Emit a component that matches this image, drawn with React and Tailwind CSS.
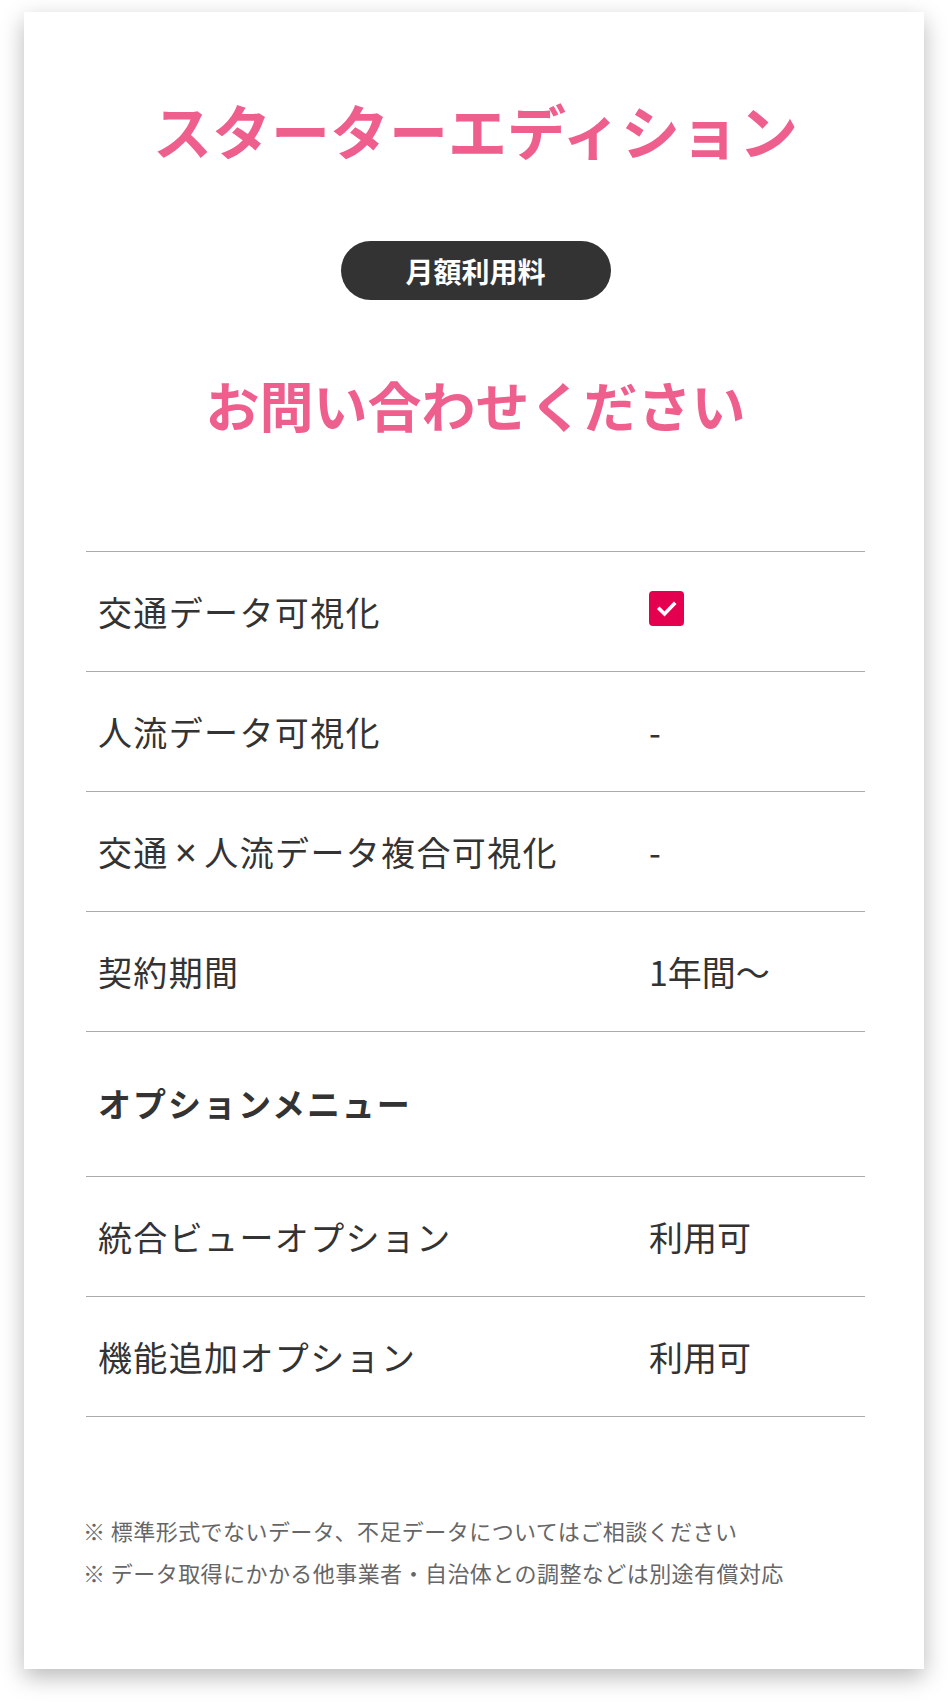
const rows = [
  { label: '交通データ可視化', value: 'check' },
  { label: '人流データ可視化', value: '-' },
  { label: 'cross', value: '-' },
  { label: '契約期間', value: '1年間〜' },
];

const options = [
  { label: '統合ビューオプション', value: '利用可' },
  { label: '機能追加オプション', value: '利用可' },
];

function CheckBox() {
  return (
    <span className="inline-flex w-[35px] h-[35px] rounded-[4px] bg-[#e5004f] items-center justify-center">
      <svg width="35" height="35" viewBox="0 0 35 35" fill="none">
        <polyline
          points="10.5,18 15.5,23 25,13"
          stroke="#fff"
          strokeWidth="3.6"
          strokeLinecap="square"
          strokeLinejoin="miter"
        />
      </svg>
    </span>
  );
}

function Label({ label }) {
  if (label === 'cross') {
    return (
      <>
        交通
        <span className="px-[6px] font-['Liberation_Sans',sans-serif] text-[38px] leading-none">×</span>
        人流データ複合可視化
      </>
    );
  }
  return label;
}

function Row({ label, value }) {
  return (
    <div className="flex items-center h-[120px] border-b border-[#aaaaaa]">
      <div className="w-[551px] pl-[12px] text-[34px] tracking-[0.04em] text-[#333]">
        <Label label={label} />
      </div>
      <div className="flex-1 pl-[12px] text-[34px] text-[#333]">
        {value === 'check' ? <CheckBox /> : value}
      </div>
    </div>
  );
}

export default function App() {
  return (
    <div className="min-h-[1704px] bg-white pt-[12px] font-['Noto_Sans_CJK_JP','Noto_Sans',sans-serif]">
      <div className="mx-auto w-[900px] bg-white shadow-[0_8px_22px_rgba(0,0,0,0.28)] pl-[62px] pr-[59px] pt-[88px] pb-[76px]">
        <h1 className="text-center text-[59px] leading-none font-bold text-[#ef5f8e]">
          スターターエディション
        </h1>

        <div className="flex justify-center mt-[82px]">
          <span className="w-[270px] h-[59px] rounded-full bg-[#333] text-white text-[28px] font-bold flex items-center justify-center">
            月額利用料
          </span>
        </div>

        <p className="mt-[78px] text-center text-[54px] leading-none font-bold text-[#ef5f8e]">
          お問い合わせください
        </p>

        <div className="mt-[119px] border-t border-[#aaaaaa]">
          {rows.map((r) => (
            <Row key={r.label} {...r} />
          ))}
          <div className="flex items-center h-[145px] border-b border-[#aaaaaa] pl-[12px] text-[33px] tracking-[0.06em] font-bold text-[#333]">
            オプションメニュー
          </div>
          {options.map((r) => (
            <Row key={r.label} {...r} />
          ))}
        </div>

        <div className="mt-[92px] -ml-[3px] text-[22px] tracking-[0.02em] leading-[42px] text-[#666]">
          <p>※ 標準形式でないデータ、不足データについてはご相談ください</p>
          <p>※ データ取得にかかる他事業者・自治体との調整などは別途有償対応</p>
        </div>
      </div>
    </div>
  );
}
